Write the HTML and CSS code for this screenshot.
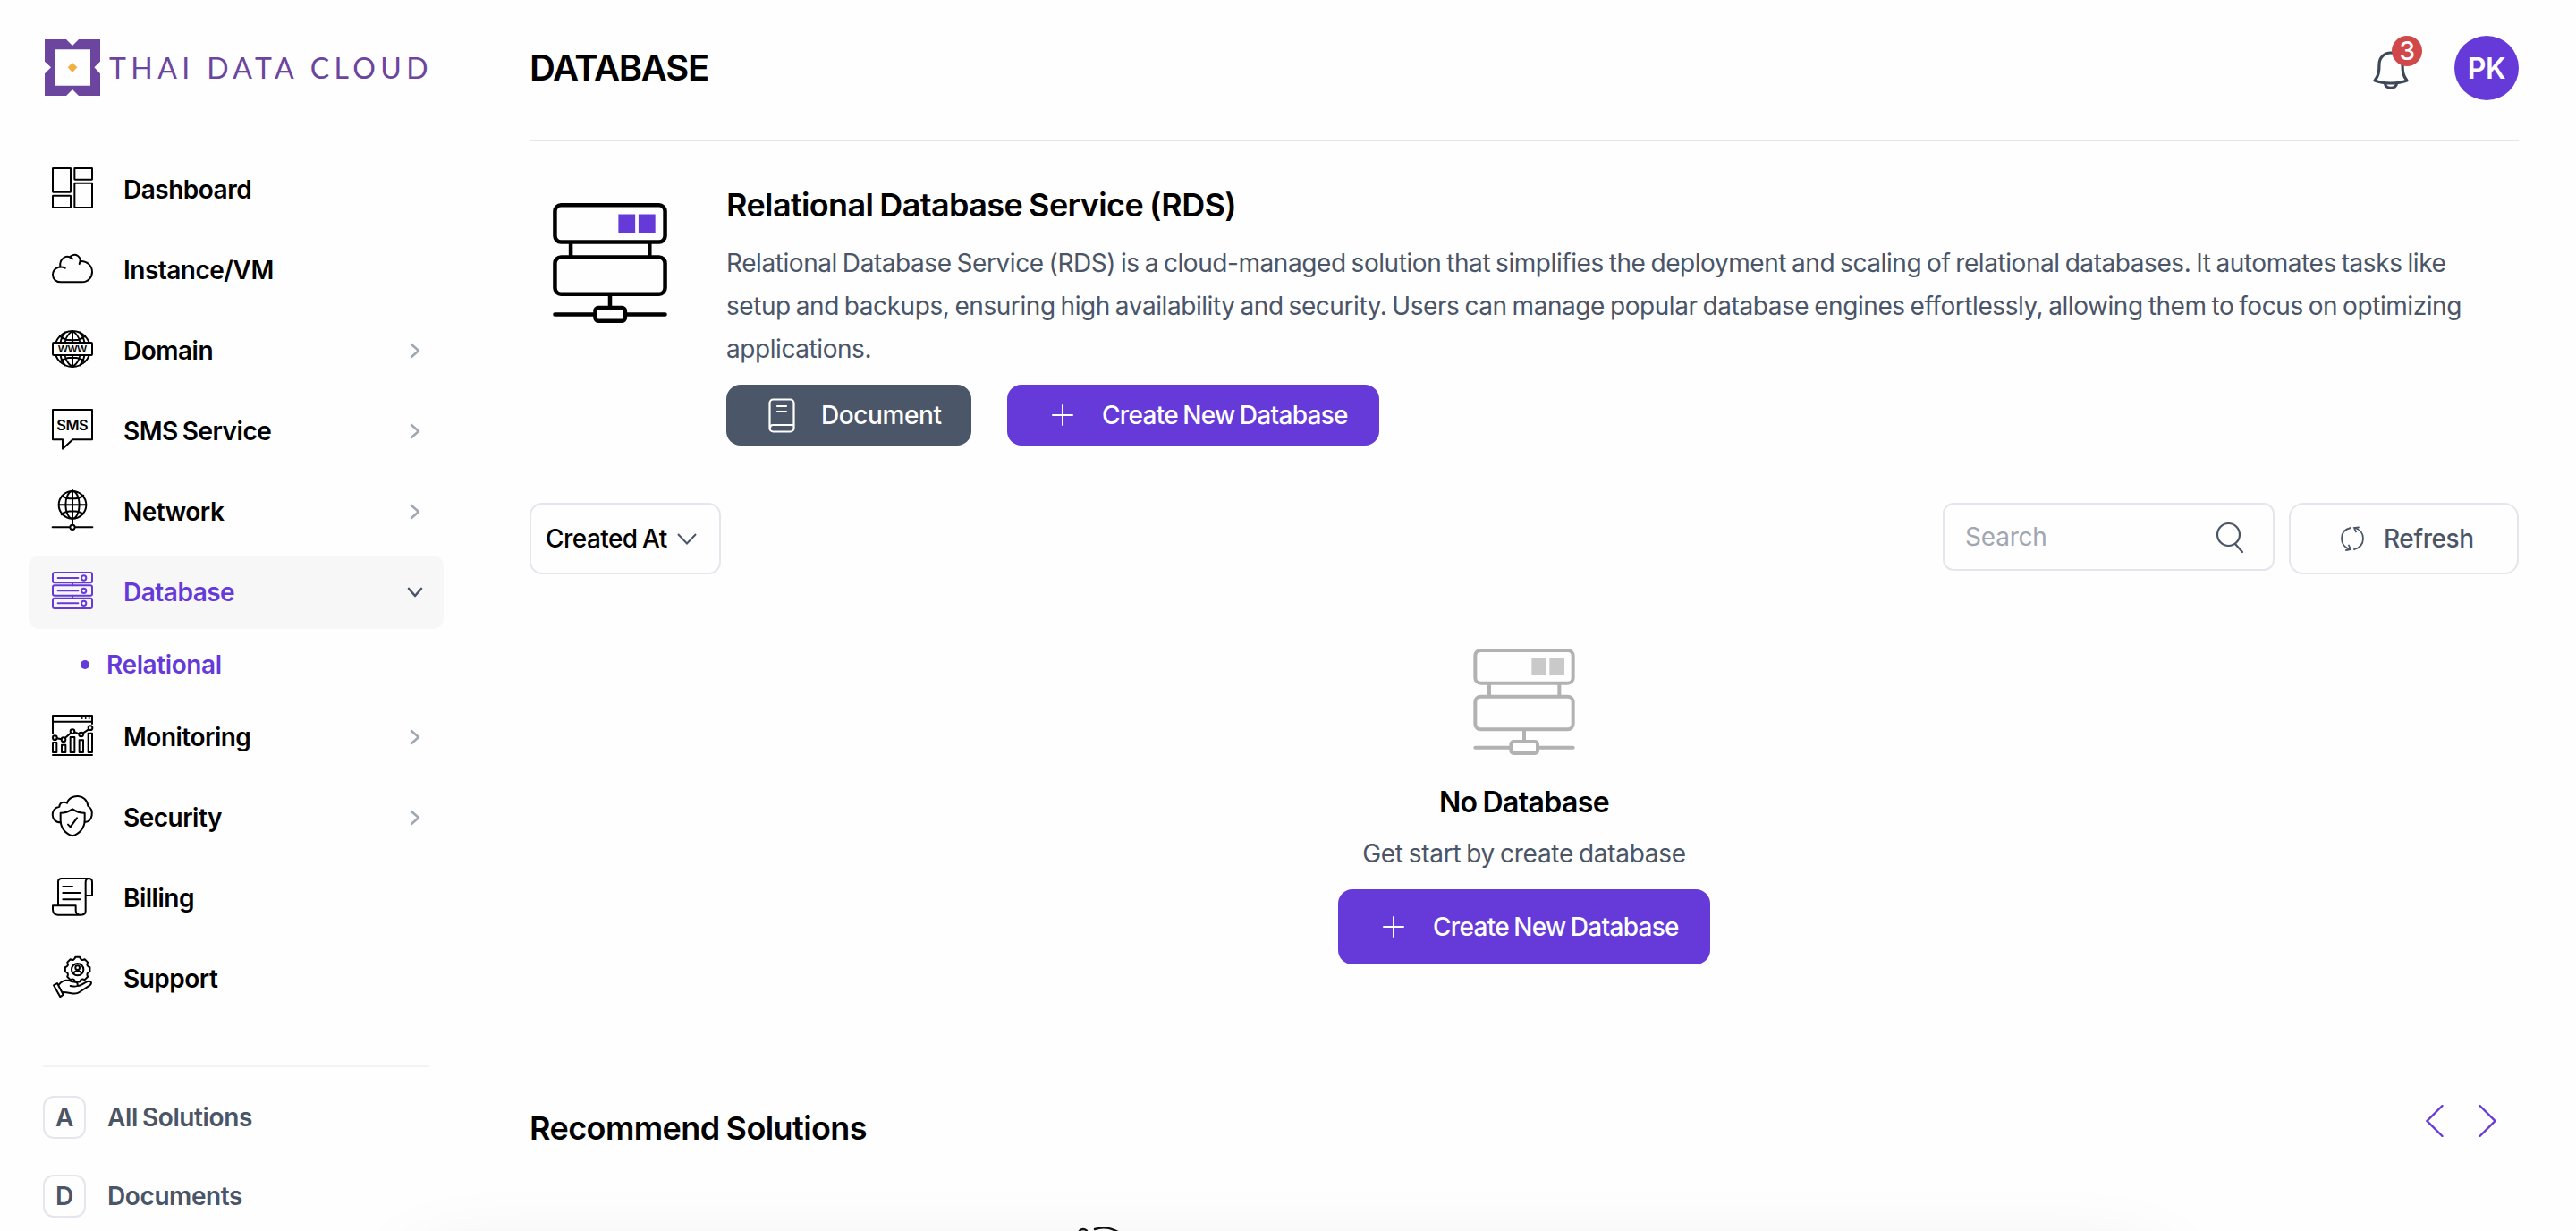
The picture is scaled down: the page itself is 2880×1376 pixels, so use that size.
FILE: index.html
```
<!DOCTYPE html>
<html lang="en">
<head>
    <meta charset="UTF-8">
    <meta name="viewport" content="width=device-width, initial-scale=1.0">
    <title>Database - Thai Data Cloud</title>
    <link rel="stylesheet" href="styles.css">
</head>
<body>
    <div class="layout">
        <aside class="sidebar">
            <a class="logo" href="#">
                <svg width="62" height="63" viewBox="0 0 186 189">
                    <path fill="#6b459e" fill-rule="evenodd" d="M0 0H72L93 21L114 0H186V74L166 94L186 115V189H114L93 168L72 189H0V115L21 94L0 74ZM34 34V155H153V34Z"/>
                    <path fill="#f2b043" d="M93 78L109 94L93 111L77 94Z"/>
                </svg>
                <span class="logo-text">THAI DATA CLOUD</span>
            </a>

            <nav class="menu">
                <a class="menu-item" href="#">
                    <svg class="menu-icon" viewBox="0 0 138 138">
                        <rect x="3" y="3" width="60" height="80" rx="1"/>
                        <rect x="3" y="95" width="60" height="40" rx="1"/>
                        <rect x="76" y="3" width="59" height="38" rx="1"/>
                        <rect x="76" y="53" width="59" height="82" rx="1"/>
                    </svg>
                    <span>Dashboard</span>
                </a>
                <a class="menu-item" href="#">
                    <svg class="menu-icon" viewBox="0 0 138 138">
                        <path d="M44 68C25 58 3 70 3 90C3 104 14 115 29 115H102C121 115 135 99 135 81C135 60 118 45 98 45"/>
                        <path d="M28 64C24 40 46 18 69 37"/>
                        <path d="M60 31C78 14 103 30 92 54"/>
                    </svg>
                    <span>Instance/VM</span>
                </a>
                <a class="menu-item" href="#">
                    <svg class="menu-icon" viewBox="0 0 138 138">
                        <circle cx="69" cy="69" r="60"/>
                        <path d="M69 9V129M69 9C32 30 32 108 69 129M69 9C106 30 106 108 69 129M27 26C46 44 92 44 111 26M27 112C46 94 92 94 111 112M44 14C32 28 27 46 26 69C27 92 32 110 44 124M94 14C106 28 111 46 112 69C111 92 106 110 94 124"/>
                        <rect class="cover" x="3" y="48" width="132" height="42" rx="3"/>
                        <text class="icon-text" x="69" y="80" font-size="33" textLength="98">WWW</text>
                    </svg>
                    <span>Domain</span>
                    <svg class="arrow" viewBox="0 0 20 20"><path d="M6 3L14 10L6 17"/></svg>
                </a>
                <a class="menu-item" href="#">
                    <svg class="menu-icon" viewBox="0 0 138 138">
                        <path d="M3 3H135V103H70L36 134V103H3Z"/>
                        <text class="icon-text" x="69" y="73" font-size="49" textLength="106">SMS</text>
                    </svg>
                    <span>SMS Service</span>
                    <svg class="arrow" viewBox="0 0 20 20"><path d="M6 3L14 10L6 17"/></svg>
                </a>
                <a class="menu-item" href="#">
                    <svg class="menu-icon" viewBox="0 0 138 138">
                        <circle cx="69" cy="52" r="46"/>
                        <ellipse cx="69" cy="52" rx="23" ry="46"/>
                        <path d="M69 4V118M23 52H115M34 22C52 34 86 34 104 22M34 82C52 70 86 70 104 82M2 127H58M80 127H136"/>
                        <circle cx="69" cy="127" r="8"/>
                        <circle class="solid" cx="69" cy="5" r="4"/>
                        <circle class="solid" cx="105" cy="21" r="4"/>
                        <circle class="solid" cx="33" cy="84" r="4"/>
                    </svg>
                    <span>Network</span>
                    <svg class="arrow" viewBox="0 0 20 20"><path d="M6 3L14 10L6 17"/></svg>
                </a>
                <a class="menu-item active" href="#">
                    <svg class="menu-icon" viewBox="0 0 138 138">
                        <rect x="3" y="9" width="132" height="34" rx="6"/>
                        <rect x="3" y="52" width="132" height="34" rx="6"/>
                        <rect x="3" y="95" width="132" height="34" rx="6"/>
                        <path d="M20 27H88M20 70H88M20 112H88M69 43V52M69 86V95"/>
                        <circle cx="107" cy="27" r="8"/>
                        <circle cx="107" cy="70" r="8"/>
                        <circle cx="107" cy="112" r="8"/>
                    </svg>
                    <span>Database</span>
                    <svg class="arrow" viewBox="0 0 20 20"><path d="M3 6L10 14L17 6"/></svg>
                </a>
                <a class="submenu-item" href="#"><i class="dot"></i>Relational</a>
                <a class="menu-item" href="#">
                    <svg class="menu-icon" viewBox="0 0 138 138">
                        <path d="M3 62V3H135V30M3 23H135M3 135H135M17 79L32 82M44 78L64 61M76 58L92 64M104 62L123 49"/>
                        <circle class="solid" cx="101" cy="12" r="3"/>
                        <circle class="solid" cx="113" cy="12" r="3"/>
                        <circle class="solid" cx="125" cy="12" r="3"/>
                        <circle cx="10" cy="77" r="7"/>
                        <circle cx="39" cy="83" r="7"/>
                        <circle cx="69" cy="56" r="7"/>
                        <circle cx="98" cy="66" r="7"/>
                        <circle cx="129" cy="44" r="7"/>
                        <path d="M3 93H16V126H3ZM33 101H46V126H33ZM62 75H76V126H62ZM92 85H105V126H92ZM122 62H135V126H122Z"/>
                    </svg>
                    <span>Monitoring</span>
                    <svg class="arrow" viewBox="0 0 20 20"><path d="M6 3L14 10L6 17"/></svg>
                </a>
                <a class="menu-item" href="#">
                    <svg class="menu-icon" viewBox="0 0 138 138">
                        <path d="M29 91C-6 91 -6 42 25 38C26 24 40 20 51 26C60 -6 117 -6 121 36C142 48 138 89 110 90"/>
                        <path d="M69 46C58 54 44 59 29 59V83C29 108 45 130 69 136C93 130 110 108 110 83V59C96 59 80 54 69 46Z"/>
                        <path d="M54 98L62 106L84 76"/>
                    </svg>
                    <span>Security</span>
                    <svg class="arrow" viewBox="0 0 20 20"><path d="M6 3L14 10L6 17"/></svg>
                </a>
                <a class="menu-item" href="#">
                    <svg class="menu-icon" viewBox="0 0 138 138">
                        <path d="M21 98V20C21 13 26 9 33 9H124C131 9 135 14 135 21V66H114"/>
                        <path d="M124 9C117 9 113 14 113 22V118C113 126 107 131 98 131H20C8 131 3 124 3 112V100H80V116C80 125 86 131 97 131"/>
                        <path d="M37 36H69M37 57H94M37 79H94"/>
                    </svg>
                    <span>Billing</span>
                </a>
                <a class="menu-item" href="#">
                    <svg class="menu-icon" viewBox="0 0 138 138">
                        <path transform="translate(86 44)" d="M7.3 -41.4Q11.5 -27.7 24.1 -34.4L34.4 -24.1Q27.7 -11.5 41.4 -7.3V7.3Q27.7 11.5 34.4 24.1L24.1 34.4Q11.5 27.7 7.3 41.4H-7.3Q-11.5 27.7 -24.1 34.4L-34.4 24.1Q-27.7 11.5 -41.4 7.3V-7.3Q-27.7 -11.5 -34.4 -24.1L-24.1 -34.4Q-11.5 -27.7 -7.3 -41.4Z"/>
                        <circle cx="86" cy="44" r="20"/>
                        <circle cx="86" cy="38" r="7"/>
                        <path d="M73 58C74 47 98 47 99 58"/>
                        <path d="M6 97L18 90L38 128L28 136Z"/>
                        <path d="M24 94C36 80 52 78 66 84C76 87 88 82 86 98C84 102 72 101 62 99M88 99C100 98 108 88 120 84C132 80 136 90 126 98L92 120C78 132 62 120 38 120"/>
                    </svg>
                    <span>Support</span>
                </a>
            </nav>

            <div class="sidebar-links">
                <a class="link-item" href="#"><span class="letter">A</span>All Solutions</a>
                <a class="link-item" href="#"><span class="letter">D</span>Documents</a>
            </div>
        </aside>

        <main class="content">
            <header class="topbar">
                <h1>DATABASE</h1>
                <div class="topbar-right">
                    <div class="bell">
                        <svg width="40" height="43" viewBox="0 0 40 43" fill="none" stroke="#3d4757" stroke-width="3.2" stroke-linejoin="round">
                            <path d="M20 2C12 2 7 8 7 15C7 24 6 28 2 33C12 37 28 37 38 33C34 28 33 24 33 15C33 8 28 2 20 2Z"/>
                            <path d="M13.500 36C13.500 43 26.500 43 26.500 36"/>
                        </svg>
                        <span class="badge">3</span>
                    </div>
                    <div class="avatar">PK</div>
                </div>
            </header>

            <section class="service">
                <svg class="service-icon" viewBox="0 0 340 357">
                    <g fill="none" stroke="#000" stroke-width="12" stroke-linecap="round">
                        <rect x="6" y="6" width="328" height="110" rx="18"/>
                        <rect x="6" y="161" width="328" height="110" rx="18"/>
                        <rect x="126" y="312" width="89" height="39" rx="9"/>
                        <path d="M53 118V159M288 118V159M170 273V310M6 332H124M217 332H334"/>
                    </g>
                    <path fill="#663ad9" d="M195 33H245V90H195ZM255 33H305V90H255Z"/>
                </svg>
                <div class="service-body">
                    <h2>Relational Database Service (RDS)</h2>
                    <p>Relational Database Service (RDS) is a cloud-managed solution that simplifies the deployment and scaling of relational databases. It automates tasks like setup and backups, ensuring high availability and security. Users can manage popular database engines effortlessly, allowing them to focus on optimizing applications.</p>
                    <div class="service-actions">
                        <button class="btn btn-dark">
                            <svg width="30" height="39" viewBox="0 0 30 39" fill="none" stroke="currentColor" stroke-width="2.2" stroke-linecap="round">
                                <rect x="1.5" y="1.5" width="27" height="36" rx="4"/>
                                <path d="M10 9H20M10 15H20M2 33C2 31 3 30 5 30H28"/>
                            </svg>
                            Document
                        </button>
                        <button class="btn btn-primary">
                            <svg width="24" height="24" viewBox="0 0 24 24" fill="none" stroke="currentColor" stroke-width="2" stroke-linecap="round"><path d="M12 1V23M1 12H23"/></svg>
                            Create New Database
                        </button>
                    </div>
                </div>
            </section>

            <div class="toolbar">
                <button class="sort">
                    Created At
                    <svg width="22" height="13" viewBox="0 0 22 13" fill="none" stroke="#4a5568" stroke-width="2"><path d="M1 1L11 11.5L21 1"/></svg>
                </button>
                <div class="toolbar-right">
                    <label class="search">
                        <input type="text" placeholder="Search">
                        <svg width="33" height="36" viewBox="0 0 33 36" fill="none" stroke="#4a5568" stroke-width="2.2" stroke-linecap="round"><circle cx="14.5" cy="14.5" r="12.5"/><path d="M22 25L30 34"/></svg>
                    </label>
                    <button class="refresh">
                        <svg width="28" height="28" viewBox="0 0 28 28" fill="none" stroke="currentColor" stroke-width="1.8" stroke-linecap="round">
                            <path d="M12 2C5 3.500 2 8 2 14C2 19 5 24 11 26M16 26C22 25 26 20 26 14C26 9 23 4 17 2"/>
                            <path d="M7 27L12 26L10 21.500M21 1.500L16 2L18 6.500"/>
                        </svg>
                        Refresh
                    </button>
                </div>
            </div>

            <section class="empty">
                <svg class="empty-icon" viewBox="0 0 340 357">
                    <g fill="none" stroke="#b2b2b2" stroke-width="12" stroke-linecap="round">
                        <rect x="6" y="6" width="328" height="110" rx="18"/>
                        <rect x="6" y="161" width="328" height="110" rx="18"/>
                        <rect x="126" y="312" width="89" height="39" rx="9"/>
                        <path d="M53 118V159M288 118V159M170 273V310M6 332H124M217 332H334"/>
                    </g>
                    <path fill="#c9c9c9" d="M195 33H245V90H195ZM255 33H305V90H255Z"/>
                </svg>
                <h3>No Database</h3>
                <p>Get start by create database</p>
                <button class="btn btn-primary btn-large">
                    <svg width="24" height="24" viewBox="0 0 24 24" fill="none" stroke="currentColor" stroke-width="2" stroke-linecap="round"><path d="M12 1V23M1 12H23"/></svg>
                    Create New Database
                </button>
            </section>

            <section class="recommend">
                <div class="recommend-head">
                    <h2>Recommend Solutions</h2>
                    <div class="slider-nav">
                        <svg width="20" height="36" viewBox="0 0 20 36"><path d="M18.500 1L1.500 18L18.500 35"/></svg>
                        <svg width="20" height="36" viewBox="0 0 20 36"><path d="M1.500 1L18.500 18L1.500 35"/></svg>
                    </div>
                </div>
                <div class="slide">
                    <svg width="90" height="90" viewBox="0 0 90 90" fill="none" stroke="#111" stroke-width="2.4" stroke-linecap="round">
                        <circle cx="11" cy="8" r="5"/>
                        <path d="M24 3C33 0 43 2 50 6C60 12 65 20 67 30"/>
                    </svg>
                </div>
            </section>
        </main>
    </div>
    <div class="bottom-shadow"></div>
</body>
</html>
```
FILE: styles.css
```
:root {
    --bg-color: #fefefe;
    --text-color: #000;
    --muted-color: #4a5568;
    --primary-color: #663ad9;
    --border-color: #e5e6eb;
    --hover-color: #f7f7f7;
    --font-main: 'Inter', sans-serif;
}

* {
    margin: 0;
    padding: 0;
    box-sizing: border-box;
}

body {
    height: 100vh;
    overflow: hidden;
    background: var(--bg-color);
    color: var(--text-color);
    font-family: var(--font-main);
    font-size: 28px;
    letter-spacing: -0.4px;
    word-spacing: -1.5px;
}

a {
    color: inherit;
    text-decoration: none;
}

button {
    font: inherit;
    letter-spacing: inherit;
    word-spacing: inherit;
    color: inherit;
    cursor: pointer;
}

.layout {
    display: flex;
    height: 100vh;
    overflow: hidden;
}

/* Sidebar */
.sidebar {
    width: 528px;
    flex: none;
    padding: 44px 32px 0;
}

.logo {
    display: flex;
    align-items: center;
    gap: 10px;
    height: 63px;
    margin-left: 18px;
}

.logo-text {
    font-family: 'Lato', sans-serif;
    font-size: 32px;
    letter-spacing: 5.4px;
    word-spacing: 0;
    color: #6b459e;
    white-space: nowrap;
}

.menu {
    display: flex;
    flex-direction: column;
    gap: 8px;
    margin-top: 64px;
}

.menu-item {
    display: flex;
    align-items: center;
    height: 82px;
    padding: 0 22px 0 26px;
    border-radius: 12px;
    font-weight: 600;
    letter-spacing: -0.5px;
}

.menu-item.active {
    background: var(--hover-color);
    color: var(--primary-color);
}

.menu-icon {
    width: 46px;
    height: 46px;
    margin: 0 34px 4px 0;
    fill: none;
    stroke: currentColor;
    stroke-width: 6;
    stroke-linecap: round;
    stroke-linejoin: round;
    overflow: visible;
}

.menu-icon .cover {
    fill: var(--bg-color);
}

.menu-icon .solid {
    fill: currentColor;
    stroke: none;
}

.icon-text {
    fill: currentColor;
    stroke: none;
    text-anchor: middle;
    font-weight: 600;
    letter-spacing: 0;
}

.arrow {
    width: 20px;
    height: 20px;
    margin-left: auto;
    fill: none;
    stroke: #a0a7b4;
    stroke-width: 2.6;
    stroke-linecap: round;
    stroke-linejoin: round;
}

.active .arrow {
    stroke: var(--muted-color);
}

.submenu-item {
    display: flex;
    align-items: center;
    gap: 19px;
    height: 64px;
    padding-left: 58px;
    color: var(--primary-color);
    font-weight: 600;
}

.dot {
    width: 10px;
    height: 10px;
    border-radius: 50%;
    background: var(--primary-color);
}

.sidebar-links {
    display: flex;
    flex-direction: column;
    gap: 40px;
    margin: 56px 16px 0;
    padding-top: 32px;
    border-top: 2px solid #f3f3f5;
}

.link-item {
    display: flex;
    align-items: center;
    gap: 24px;
    color: var(--muted-color);
    font-weight: 600;
}

.letter {
    display: flex;
    align-items: center;
    justify-content: center;
    width: 48px;
    height: 48px;
    border: 2px solid var(--border-color);
    border-radius: 12px;
}

/* Main column */
.content {
    flex: 1;
    padding: 0 64px;
}

.topbar {
    display: flex;
    align-items: center;
    justify-content: space-between;
    height: 158px;
    padding-bottom: 4px;
    border-bottom: 2px solid var(--border-color);
}

.topbar h1 {
    margin-bottom: 2px;
    font-size: 40px;
    font-weight: 600;
    letter-spacing: -1.3px;
}

.topbar-right {
    display: flex;
    align-items: center;
    gap: 51px;
}

.bell {
    position: relative;
    height: 43px;
    margin-top: 4px;
}

.bell svg {
    display: block;
}

.badge {
    position: absolute;
    top: -17px;
    left: 21px;
    display: flex;
    align-items: center;
    justify-content: center;
    width: 34px;
    height: 34px;
    border-radius: 50%;
    background: #d1484b;
    color: #fff;
    font-size: 28px;
    font-weight: 500;
}

.avatar {
    display: flex;
    align-items: center;
    justify-content: center;
    width: 72px;
    height: 72px;
    border-radius: 50%;
    background: var(--primary-color);
    color: #fff;
    font-size: 32px;
    font-weight: 600;
}

.service {
    display: flex;
    padding-top: 44px;
}

.service-icon {
    flex: none;
    width: 128px;
    height: 134px;
    margin: 25px 66px 0 26px;
}

.service h2 {
    font-size: 36px;
    font-weight: 600;
    line-height: 54px;
    letter-spacing: -0.62px;
}

.service p {
    width: 1960px;
    margin-top: 14px;
    color: var(--muted-color);
    line-height: 48px;
    letter-spacing: -0.43px;
}

.service-actions {
    display: flex;
    gap: 40px;
    margin-top: 16px;
}

.btn {
    display: flex;
    align-items: center;
    height: 68px;
    border: none;
    border-radius: 16px;
    color: #fff;
    font-weight: 500;
}

.btn-dark {
    gap: 29px;
    width: 274px;
    padding-left: 47px;
    background: #4b5668;
}

.btn-primary {
    gap: 32px;
    width: 416px;
    padding-left: 50px;
    background: var(--primary-color);
    letter-spacing: -0.7px;
}

.btn-large {
    height: 84px;
}

.toolbar {
    display: flex;
    justify-content: space-between;
    height: 80px;
    margin-top: 64px;
}

.sort {
    display: flex;
    align-items: center;
    gap: 11px;
    width: 214px;
    padding-left: 16px;
    background: none;
    border: 2px solid var(--border-color);
    border-radius: 14px;
    font-weight: 500;
    letter-spacing: -0.55px;
    white-space: nowrap;
}

.toolbar-right {
    display: flex;
    align-items: flex-start;
    gap: 16px;
}

.search {
    display: flex;
    align-items: center;
    width: 371px;
    height: 76px;
    padding: 0 31px 0 23px;
    border: 2px solid var(--border-color);
    border-radius: 12px;
}

.search input {
    flex: 1;
    width: 0;
    border: none;
    outline: none;
    background: none;
    font: inherit;
    letter-spacing: -0.2px;
}

.search input::placeholder {
    color: #a0a6b2;
}

.search svg {
    margin-top: 2px;
}

.refresh {
    display: flex;
    align-items: center;
    gap: 21px;
    width: 257px;
    height: 80px;
    padding-left: 55px;
    background: none;
    border: 2px solid var(--border-color);
    border-radius: 16px;
    color: var(--muted-color);
    font-weight: 500;
}

.empty {
    display: flex;
    flex-direction: column;
    align-items: center;
    padding-top: 83px;
}

.empty-icon {
    width: 114px;
    height: 119px;
}

.empty h3 {
    margin-top: 29px;
    font-size: 32px;
    font-weight: 600;
    line-height: 48px;
    letter-spacing: -0.6px;
}

.empty p {
    margin: 11px 0 18px;
    color: var(--muted-color);
    line-height: 44px;
    letter-spacing: -0.3px;
}

.recommend {
    margin-top: 155px;
}

.recommend-head {
    display: flex;
    justify-content: space-between;
    height: 54px;
}

.recommend h2 {
    margin-top: 1px;
    font-size: 36px;
    font-weight: 600;
    line-height: 54px;
    letter-spacing: -0.58px;
}

.slider-nav {
    display: flex;
    gap: 39px;
    margin: 2px 25px 0 0;
    fill: none;
    stroke: var(--primary-color);
    stroke-width: 2.4;
    stroke-linecap: round;
}

.slide {
    margin-top: 84px;
    padding-left: 608px;
}

/* Soft shade rising from under the fold */
.bottom-shadow {
    position: fixed;
    left: 475px;
    right: 475px;
    bottom: -354px;
    height: 300px;
    box-shadow: 0 0 100px rgba(0, 0, 0, 0.17);
    pointer-events: none;
}
```
